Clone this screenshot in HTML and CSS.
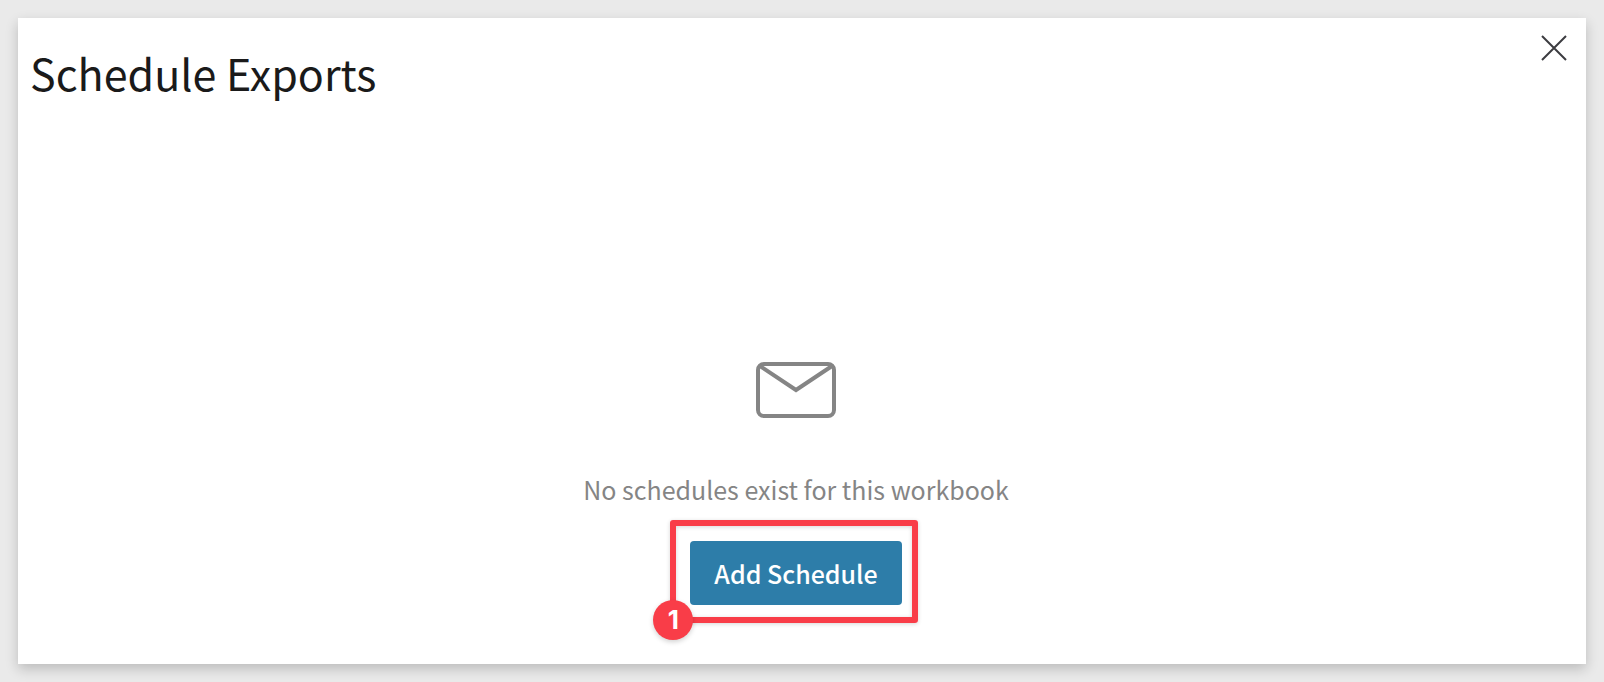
FILE: index.html
```html
<!DOCTYPE html>
<html lang="en">
<head>
  <meta charset="utf-8">
  <title>Schedule Exports</title>
  <link rel="stylesheet" href="styles.css">
</head>
<body>
  <section class="dialog" aria-labelledby="dialog-title">
    <header class="dialog-header">
      <h1 class="dialog-title" id="dialog-title">Schedule Exports</h1>
      <button class="close-button" type="button" aria-label="Close">
        <svg class="close-icon" viewBox="0 0 28 28" aria-hidden="true">
          <path d="M2 2 26 26M26 2 2 26"/>
        </svg>
      </button>
    </header>
    <div class="empty-state">
      <svg class="mail-icon" viewBox="0 0 80 56" aria-hidden="true">
        <rect x="2" y="2" width="76" height="52" rx="6"/>
        <path d="M4 4 40 28 76 4"/>
      </svg>
      <p class="empty-message">No schedules exist for this workbook</p>
      <div class="action">
        <button class="primary-button" type="button">Add Schedule</button>
        <div class="highlight"><span class="step-badge">1</span></div>
      </div>
    </div>
  </section>
</body>
</html>
```
FILE: styles.css
```css
* {
  box-sizing: border-box;
}

body {
  margin: 0;
  min-height: 100vh;
  padding: 18px;
  display: flex;
  background: #eaeaea;
  font-family: "Noto Sans CJK SC", "Noto Sans", sans-serif;
}

.dialog {
  flex: 1;
  display: flex;
  flex-direction: column;
  padding: 12px;
  background: #fff;
  box-shadow: 0 5px 12px rgba(0, 0, 0, 0.2);
}

.dialog-header {
  display: flex;
  justify-content: space-between;
  align-items: flex-start;
}

.dialog-title {
  margin: 10px 0 0;
  color: #1a1a1a;
  font-size: 43px;
  font-weight: 400;
  line-height: 64px;
}

.close-button {
  margin: 0;
  padding: 4px 6px;
  border: 0;
  background: transparent;
  cursor: pointer;
}

.close-icon {
  display: block;
  width: 28px;
  height: 28px;
  fill: none;
  stroke: #3c3c40;
  stroke-width: 2;
}

.empty-state {
  flex: 1;
  display: flex;
  flex-direction: column;
  align-items: center;
  justify-content: flex-end;
  padding: 0 12px 47px 0;
}

.mail-icon {
  width: 80px;
  height: 56px;
  fill: none;
  stroke: #858585;
  stroke-width: 4;
}

.empty-message {
  margin: 51px 0 32px;
  color: #858585;
  font-size: 25px;
  line-height: 40px;
}

.action {
  position: relative;
}

.primary-button {
  display: block;
  padding: 12px 24px;
  border: 0;
  border-radius: 4px;
  background: #2d7da9;
  color: #fff;
  font-family: inherit;
  font-size: 25px;
  font-weight: 500;
  line-height: 40px;
  cursor: pointer;
}

.highlight {
  position: absolute;
  inset: -21px -16px -18px -20px;
  border: 6px solid #f93d48;
  border-radius: 3px;
  box-shadow: 0 1px 4px rgba(0, 0, 0, 0.16), inset 0 1px 4px rgba(0, 0, 0, 0.16);
  pointer-events: none;
}

.step-badge {
  position: absolute;
  left: -23px;
  bottom: -23px;
  width: 40px;
  height: 40px;
  border-radius: 50%;
  background: #f93d48;
  box-shadow: 0 2px 5px rgba(0, 0, 0, 0.18);
  color: #fff;
  font-family: Inter, sans-serif;
  font-size: 26px;
  font-weight: 700;
  line-height: 40px;
  text-align: center;
}
```
